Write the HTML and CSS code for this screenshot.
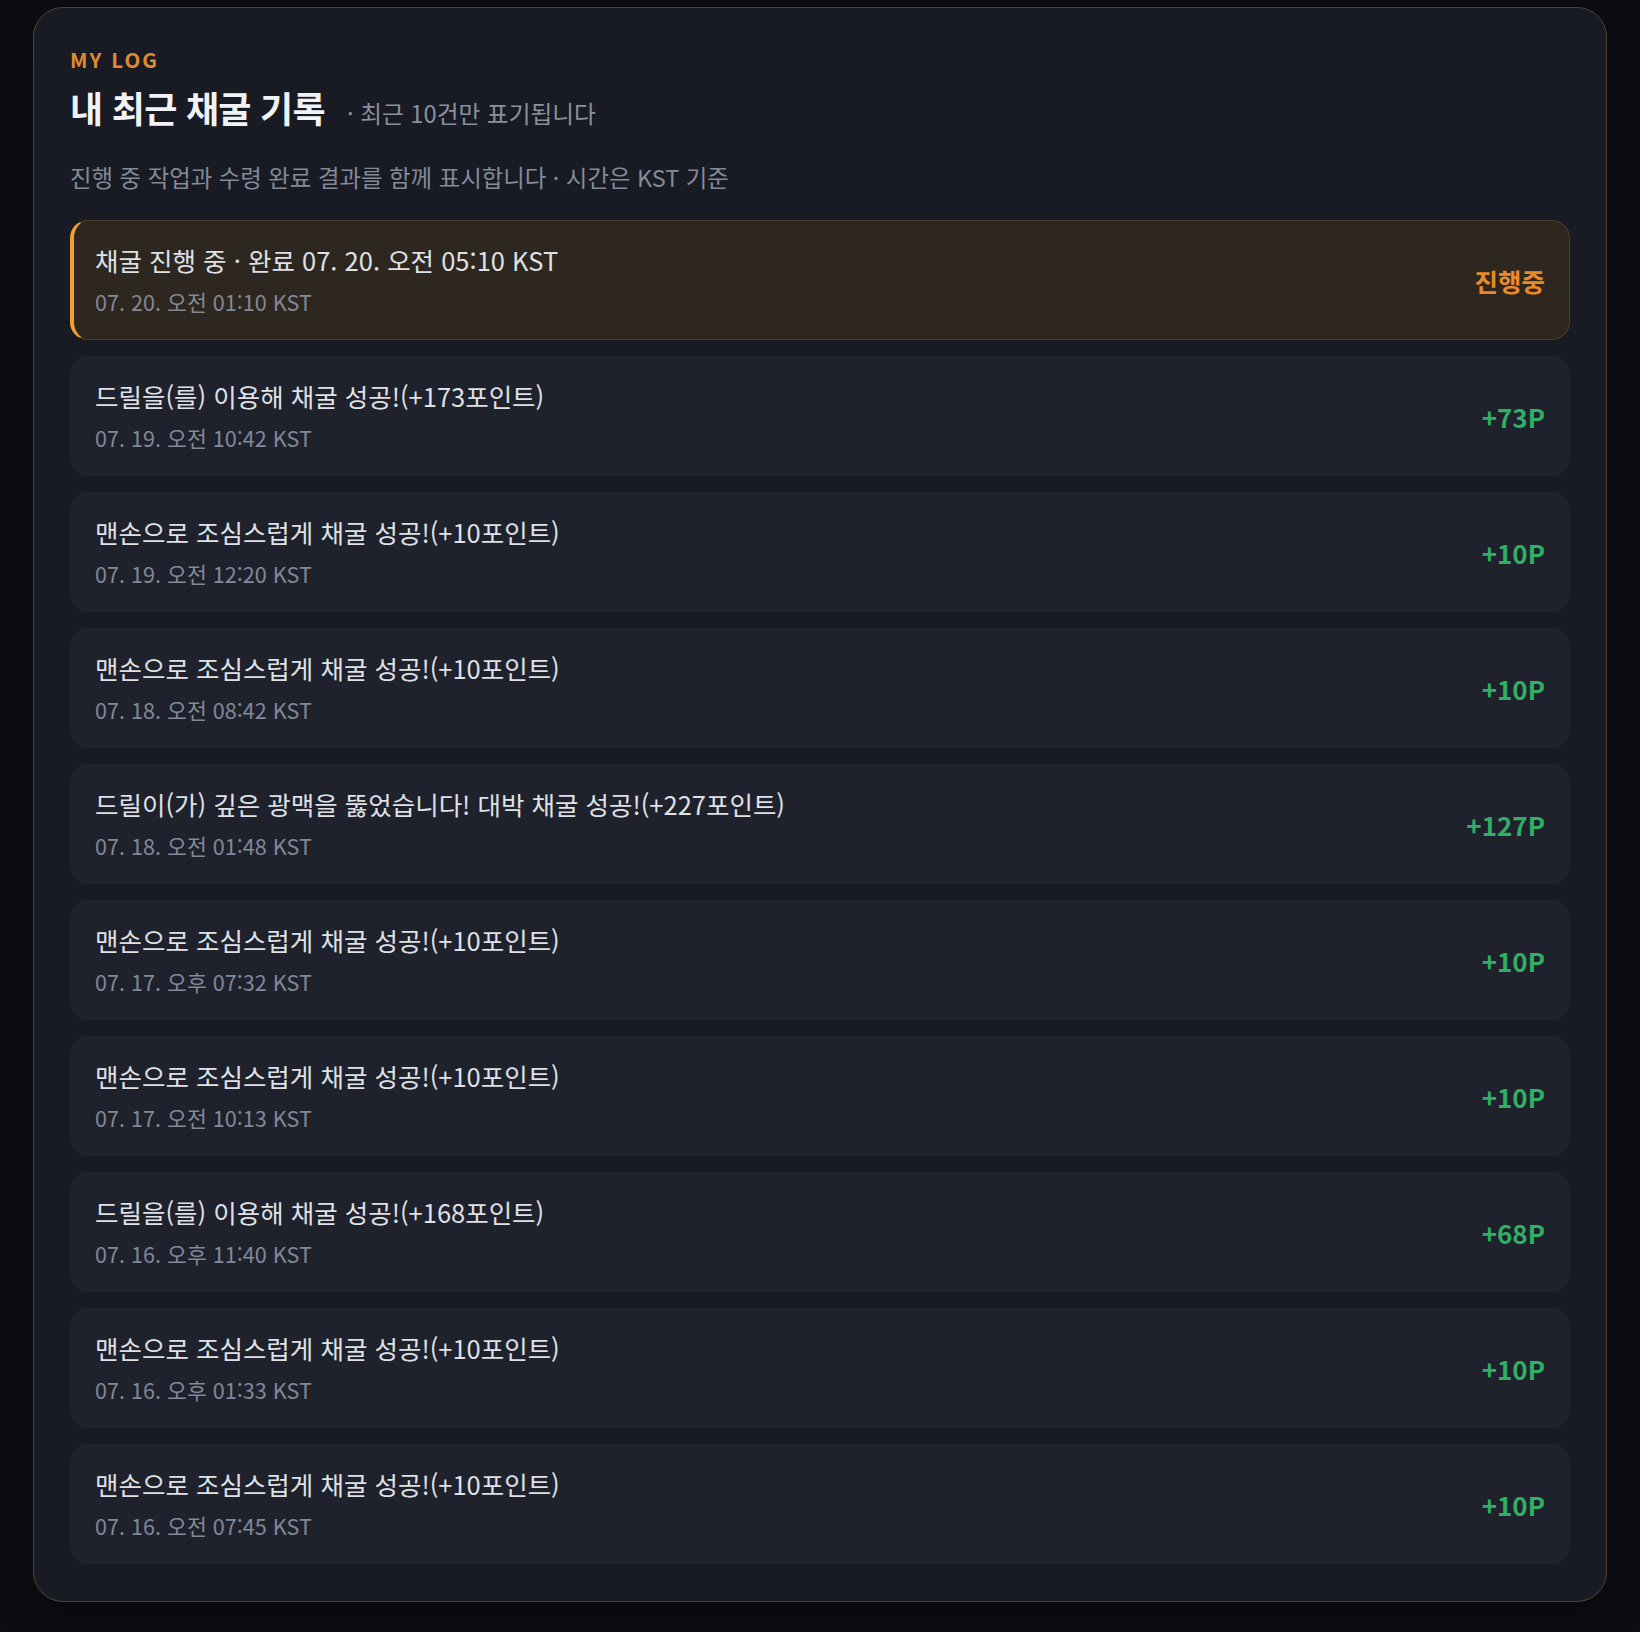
FILE: index.html
```html
<!DOCTYPE html>
<html lang="ko">
<head>
<meta charset="utf-8">
<title>MY LOG</title>
<link rel="stylesheet" href="styles.css">
</head>
<body>
<section class="card">
  <div class="eyebrow">MY LOG</div>
  <div class="title-row">
    <h2 class="title">내 최근 채굴 기록</h2>
    <span class="subtitle">· 최근 10건만 표기됩니다</span>
  </div>
  <p class="desc">진행 중 작업과 수령 완료 결과를 함께 표시합니다 · 시간은 KST 기준</p>
  <ul class="log-list">
    <li class="log-item active">
      <div class="log-text">
        <div class="log-title">채굴 진행 중 · 완료 07. 20. 오전 05:10 KST</div>
        <div class="log-date">07. 20. 오전 01:10 KST</div>
      </div>
      <div class="log-status">진행중</div>
    </li>
    <li class="log-item">
      <div class="log-text">
        <div class="log-title">드릴을(를) 이용해 채굴 성공!(+173포인트)</div>
        <div class="log-date">07. 19. 오전 10:42 KST</div>
      </div>
      <div class="log-amount">+73P</div>
    </li>
    <li class="log-item">
      <div class="log-text">
        <div class="log-title">맨손으로 조심스럽게 채굴 성공!(+10포인트)</div>
        <div class="log-date">07. 19. 오전 12:20 KST</div>
      </div>
      <div class="log-amount">+10P</div>
    </li>
    <li class="log-item">
      <div class="log-text">
        <div class="log-title">맨손으로 조심스럽게 채굴 성공!(+10포인트)</div>
        <div class="log-date">07. 18. 오전 08:42 KST</div>
      </div>
      <div class="log-amount">+10P</div>
    </li>
    <li class="log-item">
      <div class="log-text">
        <div class="log-title">드릴이(가) 깊은 광맥을 뚫었습니다! 대박 채굴 성공!(+227포인트)</div>
        <div class="log-date">07. 18. 오전 01:48 KST</div>
      </div>
      <div class="log-amount">+127P</div>
    </li>
    <li class="log-item">
      <div class="log-text">
        <div class="log-title">맨손으로 조심스럽게 채굴 성공!(+10포인트)</div>
        <div class="log-date">07. 17. 오후 07:32 KST</div>
      </div>
      <div class="log-amount">+10P</div>
    </li>
    <li class="log-item">
      <div class="log-text">
        <div class="log-title">맨손으로 조심스럽게 채굴 성공!(+10포인트)</div>
        <div class="log-date">07. 17. 오전 10:13 KST</div>
      </div>
      <div class="log-amount">+10P</div>
    </li>
    <li class="log-item">
      <div class="log-text">
        <div class="log-title">드릴을(를) 이용해 채굴 성공!(+168포인트)</div>
        <div class="log-date">07. 16. 오후 11:40 KST</div>
      </div>
      <div class="log-amount">+68P</div>
    </li>
    <li class="log-item">
      <div class="log-text">
        <div class="log-title">맨손으로 조심스럽게 채굴 성공!(+10포인트)</div>
        <div class="log-date">07. 16. 오후 01:33 KST</div>
      </div>
      <div class="log-amount">+10P</div>
    </li>
    <li class="log-item">
      <div class="log-text">
        <div class="log-title">맨손으로 조심스럽게 채굴 성공!(+10포인트)</div>
        <div class="log-date">07. 16. 오전 07:45 KST</div>
      </div>
      <div class="log-amount">+10P</div>
    </li>
  </ul>
</section>
</body>
</html>
```

FILE: styles.css
```css
* {
  box-sizing: border-box;
}

html, body {
  margin: 0;
  padding: 0;
  background: #0c0e13;
}

body {
  padding: 7px 33px 32px;
  font-family: "Noto Sans CJK KR", "Noto Sans", sans-serif;
  color: #e3e5ea;
}

.card {
  background: #181b24;
  border: 1px solid #54432e;
  border-radius: 30px;
  padding: 39px 36px 37px;
  box-shadow: 0 10px 40px rgba(0, 0, 0, 0.45);
}

.eyebrow {
  font-size: 20.5px;
  font-weight: 700;
  letter-spacing: 0.1em;
  line-height: 24px;
  color: #e08a30;
}

.title-row {
  display: flex;
  align-items: baseline;
  gap: 22px;
  margin-top: 16px;
}

.title {
  margin: 0;
  font-size: 36px;
  font-weight: 700;
  letter-spacing: -0.02em;
  line-height: 40px;
  color: #f1f2f6;
}

.subtitle {
  font-size: 23.7px;
  color: #8b909c;
}

.desc {
  margin: 31px 0 0;
  font-size: 23.4px;
  line-height: 32px;
  color: #858a97;
}

.log-list {
  list-style: none;
  margin: 27px 0 0;
  padding: 0;
  display: flex;
  flex-direction: column;
  gap: 16px;
}

.log-item {
  display: flex;
  align-items: center;
  justify-content: space-between;
  min-height: 120px;
  padding: 22px 24px;
  background: #1f222c;
  border: 1px solid #222530;
  border-radius: 18px;
}

.log-item.active {
  background: #2d2720;
  border-color: #4a3c29;
  border-left: 4px solid #f0a02c;
  padding-left: 21px;
}

.log-title {
  font-size: 25.5px;
  line-height: 34px;
  color: #dfe1e7;
}

.log-date {
  margin-top: 10px;
  font-size: 21.6px;
  line-height: 30px;
  color: #828896;
}

.log-amount {
  font-size: 26px;
  font-weight: 700;
  color: #2fb064;
}

.log-status {
  font-size: 25.5px;
  font-weight: 700;
  color: #e8892b;
}
```
